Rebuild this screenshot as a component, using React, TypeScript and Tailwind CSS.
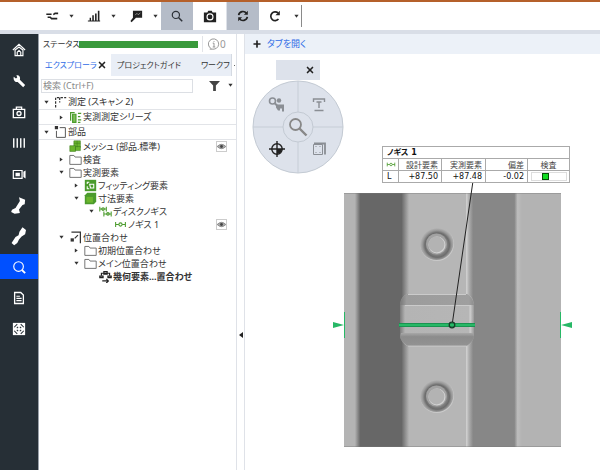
import React from 'react';
import clsx from 'clsx';
import { Plus, X } from 'lucide-react';

const Caret = ({ open = true }) => (
  <svg viewBox="0 0 6 6" className="h-[5px] w-[5px] shrink-0" fill="#333">
    {open ? <path d="M0.5 1h5L3 4.500z" /> : <path d="M1 .5v5l3.500-2.500z" />}
  </svg>
);

const Magnifier = ({ className = '' }) => (
  <svg viewBox="0 0 16 16" className={className} fill="none" stroke="currentColor">
    <circle cx="6.5" cy="6.5" r="4.8" strokeWidth="1.6" />
    <path d="M10 10l5 5" strokeWidth="2" />
  </svg>
);

const toolIcons = {
  align: (
    <g fill="none" stroke="#222" strokeWidth="1.800">
      <path d="M1.500 6h6M9.500 6.500l2-1.500h3.500" />
      <path d="M3 9.500h3l1.500 1.500H14" />
    </g>
  ),
  bars: <path fill="#222" d="M1 13h14v1.4H1zM3 10h1.6v4H3zM6 7h1.8v7H6zM9.2 5H11v9H9.2zM12.4 2h1.8v12h-1.8z" />,
  label: (
    <g>
      <path fill="#222" d="M4.500 2H15v8H8l-5 5-1.4-1.4L4.500 10z" />
      <path d="M7 7l2-2 1.5 1.5L13 4.500" stroke="#ccc" fill="none" strokeWidth=".7" />
    </g>
  ),
  camera: (
    <g>
      <path fill="#222" d="M1 4h4l1-2h4l1 2h4v11H1z" />
      <circle cx="8" cy="9" r="3.4" fill="none" stroke="#fff" strokeWidth="1.3" />
    </g>
  ),
  sync: (
    <g fill="none" stroke="#222" strokeWidth="1.9">
      <path d="M3 7a5 5 0 0 1 9-2M13 9a5 5 0 0 1-9 2" />
      <path d="M13.500 2v4.500H9zM2.500 14V9.500H7z" fill="#222" stroke="none" />
    </g>
  ),
  rotate: (
    <g fill="none" stroke="#222" strokeWidth="1.900">
      <path d="M12 11.500A5 5 0 1 1 11.500 4.500" />
      <path d="M13.500 2v5H8.500z" fill="#222" stroke="none" />
    </g>
  ),
};

const ToolIcon = ({ name }) => (
  <svg viewBox="0 0 16 16" className="h-[14px] w-[14px]">
    {toolIcons[name]}
  </svg>
);

const SplitTool = ({ name, title }) => (
  <div className="flex h-full">
    <button aria-label={title} className="flex w-7 items-center justify-center">
      <ToolIcon name={name} />
    </button>
    <button aria-label={`${title} menu`} className="flex w-[10px] items-center justify-center">
      <Caret />
    </button>
  </div>
);

const Toolbar = () => (
  <header className="border-t-2 border-[#b5602a] bg-white">
    <div className="flex h-7 items-center pl-[38px]">
      <div className="flex h-full gap-1">
        <SplitTool name="align" title="Align" />
        <SplitTool name="bars" title="Chart" />
        <SplitTool name="label" title="Label" />
      </div>
      <button aria-label="Inspect" className="ml-px flex h-full w-8 items-center justify-center bg-[#b5bcc8] text-[#2c3138]">
        <Magnifier className="h-3 w-3" />
      </button>
      <button aria-label="Camera" className="flex h-full w-[33px] items-center justify-center">
        <ToolIcon name="camera" />
      </button>
      <button aria-label="Sync" className="flex h-full w-[33px] items-center justify-center border-l border-[#dde1e8] bg-[#b5bcc8]">
        <ToolIcon name="sync" />
      </button>
      <button aria-label="Recalculate" className="flex h-full w-8 items-center justify-center">
        <ToolIcon name="rotate" />
      </button>
      <button aria-label="Recalculate menu" className="flex h-full w-[10px] items-center justify-center">
        <Caret />
      </button>
      <div className="h-[22px] w-px bg-[#8a8a8a]" />
    </div>
    <div className="h-1 bg-[#d9dee7]" />
  </header>
);

const navItems = [
  {
    title: 'Home',
    icon: <path d="M1 8l7-6.500L15 8M3.500 8v6.500h9V8L8 4.500zM6 14.500v-4L8 8.500l2 2v4" fill="none" stroke="#fff" strokeWidth="1.300" />,
  },
  {
    title: 'Tools',
    icon: <path d="M2 3l2.500 2L6 4 5 1.500C8 1 10 3.500 9 6.500L15 12.500 12.800 15 6.500 9C4 10 1 7 2 3z" fill="#fff" />,
  },
  {
    title: 'Measure',
    icon: (
      <g fill="none" stroke="#fff" strokeWidth="1.5">
        <path d="M1.500 5h13v9.500h-13zM5 5V2.500h6V5" />
        <circle cx="8" cy="9.700" r="2.300" />
        <path d="M8 9h.1" />
      </g>
    ),
  },
  { title: 'Series', icon: <path d="M2 2.500v11M6 2.500v11M10 2.500v11M14 2.500v11" stroke="#fff" strokeWidth="1.600" /> },
  {
    title: 'Record',
    icon: (
      <g>
        <path d="M1.500 4h10v9h-10z" fill="none" stroke="#fff" strokeWidth="1.400" />
        <path d="M4 6.500h5v4H4zM13 5.500L15.500 4v9L13 11.500z" fill="#fff" />
      </g>
    ),
  },
  { title: 'Sensor', icon: <path d="M8-1l7 3-.5 5-2.500 1-4 5 1 4-6 1-4-2 1-2.500 4-2 5-8z" fill="#fff" /> },
  { title: 'Probe', icon: <path d="M12-2l4 3-1 5-4 2.500L8 12l-2 4-3.500 2.500L-.5 16 4 9l3.500-2 1-4z" fill="#fff" /> },
  {
    title: 'Inspection',
    active: true,
    icon: (
      <g fill="none" stroke="#fff">
        <circle cx="7.500" cy="7.500" r="5.500" strokeWidth="1.300" />
        <path d="M11.500 11.500L15 15" strokeWidth="2.200" />
      </g>
    ),
  },
  {
    title: 'Report',
    icon: (
      <g>
        <path d="M3 1.700h7l3 3v9.600H3z" fill="none" stroke="#fff" strokeWidth="1.500" />
        <path d="M5 6h4M5 8.500h6M5 11h6" stroke="#fff" strokeWidth="1.300" />
      </g>
    ),
  },
  {
    title: 'Modules',
    icon: (
      <g>
        <path d="M1 1h14v14H1z" fill="#fff" />
        <path d="M2.500 6L6 2.500M10 2.500L13.500 6M2.500 10L6 13.500M10 13.500l3.500-3.500M5.500 7L7 5.500M9 5.500L10.500 7M5.500 9L7 10.500M9 10.500L10.500 9" stroke="#262f36" strokeWidth="1.200" />
      </g>
    ),
  },
];

const Sidebar = () => (
  <nav className="flex w-[39px] shrink-0 flex-col gap-1.5 border-r border-[#9aa1aa] bg-[#262f36] pt-[3px]">
    {navItems.map((item) => (
      <button
        key={item.title}
        aria-label={item.title}
        className={clsx('flex h-[25px] w-full items-center justify-center', item.active && 'bg-[#0050ff]')}
      >
        <svg viewBox="0 0 16 16" className="h-[14px] w-[14px] overflow-visible">
          {item.icon}
        </svg>
      </button>
    ))}
  </nav>
);

const green = '#4b9b2c';

const treeIcons = {
  scan: <path d="M2 14V2h13M7 2v6" fill="none" stroke="#333" strokeWidth="1.500" strokeDasharray="3 1.500" />,
  series: (
    <g fill="none" stroke={green} strokeWidth="1.500">
      <path d="M2 12V2h5" />
      <path d="M4.500 4h4v10h-4z" fill="#7fc25a" />
      <path d="M11 3h4M11 7h3M11 11h4M11 14h3" />
    </g>
  ),
  part: (
    <g>
      <path d="M7 2h7v12H3V6" fill="none" stroke="#555" strokeWidth="1.200" />
      <path d="M1 0h4v4H1z" fill="#333" />
    </g>
  ),
  mesh: (
    <g fill="#6bb52d" stroke="#3f7f1f" strokeWidth=".7">
      <path d="M6 1h8v8H6z" />
      <path d="M1 7h7v7H1zM8 8h6v5H8z" />
      <path d="M6 4h8M10 1v8" />
    </g>
  ),
  folder: <path d="M1 3h5l1.500 2H15v9H1z" fill="none" stroke="#666" strokeWidth="1.100" />,
  fitting: (
    <g>
      <path d="M1 1h14v14H1z" fill={green} />
      <g fill="none" stroke="#fff" strokeWidth="1.300">
        <path d="M4 6V4h2.500M4 9v3h2.500" />
        <path d="M7 6.500h5v4.500H8z" />
      </g>
    </g>
  ),
  dimension: (
    <g>
      <path d="M1 4l3-3h11v11l-3 3H1z" fill={green} />
      <path d="M3 6h8v7H3z" fill="#6bb52d" />
    </g>
  ),
  disc: (
    <g fill="none" stroke={green} strokeWidth="1.300">
      <path d="M1 2v6M1 5h8M9 2v6M6 8v6M6 11h9M15 8v6" />
      <circle cx="5" cy="5" r="1.600" />
      <circle cx="11" cy="11" r="1.600" />
    </g>
  ),
  caliper: (
    <g fill="none" stroke={green} strokeWidth="1.300">
      <path d="M2 5v6M2 8h4M10 8h4M14 5v6" />
      <circle cx="8" cy="8" r="2" />
    </g>
  ),
  align: (
    <g fill="none" stroke="#333" strokeWidth="1.500">
      <path d="M3 1.500h11V15" />
      <path d="M7 9l4-4" />
      <path d="M2 9h4v4H2z" fill="#333" stroke="none" />
    </g>
  ),
  geometry: (
    <g fill="none" stroke="#222" strokeWidth="1.500">
      <path d="M3 7V4h10v3M6 2h4v3H6z" />
      <path d="M1 7.500h4v2H1zM11 7.500h4v2h-4z" />
      <path d="M4 13.500h7M9 11l2.500 2.500L9 16" />
    </g>
  ),
};

const TreeIcon = ({ name }) => (
  <svg viewBox="0 0 16 16" className="h-[13px] w-[13px] shrink-0">
    {treeIcons[name]}
  </svg>
);

const treeRows = [
  { label: '測定 (スキャン 2)', icon: 'scan', indent: 'pl-[5px]', open: true, group: true },
  { label: '実測測定シリーズ', icon: 'series', indent: 'pl-5', open: false, group: true },
  { label: '部品', icon: 'part', indent: 'pl-[5px]', open: true, group: true },
  { label: 'メッシュ (部品.標準)', icon: 'mesh', indent: 'pl-5', eye: true },
  { label: '検査', icon: 'folder', indent: 'pl-5', open: false },
  { label: '実測要素', icon: 'folder', indent: 'pl-5', open: true },
  { label: 'フィッティング要素', icon: 'fitting', indent: 'pl-[35px]', open: false },
  { label: '寸法要素', icon: 'dimension', indent: 'pl-[35px]', open: true },
  { label: 'ディスクノギス', icon: 'disc', indent: 'pl-[50px]', open: true },
  { label: 'ノギス 1', icon: 'caliper', indent: 'pl-[65px]', eye: true },
  { label: '位置合わせ', icon: 'align', indent: 'pl-5', open: true },
  { label: '初期位置合わせ', icon: 'folder', indent: 'pl-[35px]', open: false },
  { label: 'メイン位置合わせ', icon: 'folder', indent: 'pl-[35px]', open: true },
  { label: '幾何要素...置合わせ', icon: 'geometry', indent: 'pl-[50px]', bold: true },
];

const EyeButton = () => (
  <button aria-label="Visibility" className="mr-[9px] ml-auto flex h-[11px] w-[11px] items-center justify-center border border-[#ccc]">
    <svg viewBox="0 0 10 8" className="h-[7px] w-[9px]">
      <path d="M0 4q5-5 10 0q-5 5-10 0z" fill="#aaa" stroke="#777" strokeWidth=".8" />
      <circle cx="5" cy="4" r="1.600" fill="#444" />
    </svg>
  </button>
);

const Tree = () => (
  <ul>
    {treeRows.map((row) => (
      <li
        key={row.label}
        className={clsx(
          'flex items-center text-[9px] whitespace-nowrap',
          row.indent,
          row.group ? 'h-[15px] border-b border-[#e2e4e8]' : 'h-[13px]',
          row.bold && 'font-bold'
        )}
      >
        <span className="mr-[5px] flex w-[5px]">{row.open !== undefined && <Caret open={row.open} />}</span>
        <TreeIcon name={row.icon} />
        <span className="ml-px">{row.label}</span>
        {row.eye && <EyeButton />}
      </li>
    ))}
  </ul>
);

const Explorer = () => (
  <aside className="w-[198px] shrink-0 border-r border-[#dfe2e8] bg-white">
    <div className="flex h-5 items-center pl-1">
      <span className="w-9 shrink-0 text-[8px] whitespace-nowrap">ステータス</span>
      <div className="h-[7px] w-[119px] shrink-0 bg-[#3a9a3c]" />
      <div className="ml-1 flex h-4 items-center border-l border-[#e2e4e8] pl-[5px] text-[10px] text-[#999]">
        <svg viewBox="0 0 14 14" className="h-3 w-3" fill="none" stroke="#888">
          <path d="M4 12.500A6 6 0 1 1 7 13H2M7 6v4.500M5.500 6H7M5.500 10.500h3M7 3.500v1" />
        </svg>
        0
      </div>
    </div>
    <div role="tablist" className="flex h-[22px] items-stretch bg-[#e9eef6] text-[8px] whitespace-nowrap">
      <button role="tab" aria-selected="true" className="flex w-[72px] shrink-0 items-center justify-between bg-white pr-1 pl-1.5 text-[#2e6be6]">
        エクスプローラ
        <X className="h-[10px] w-[10px] shrink-0 text-[#222]" strokeWidth={4} />
      </button>
      <button role="tab" aria-selected="false" className="w-[84px] shrink-0 pl-1.5 text-left">
        プロジェクトガイド
      </button>
      <button role="tab" aria-selected="false" className="w-9 shrink-0 pl-1.5 text-left">
        ワークフ
      </button>
      <button aria-label="More tabs" className="flex grow items-center justify-center border-l border-[#d5dae2] bg-white">
        <span className="h-px w-px bg-[#666]" />
      </button>
    </div>
    <div className="flex h-[19px] items-center pl-0.5">
      <input
        aria-label="検索"
        placeholder="検索 (Ctrl+F)"
        className="h-[14px] w-[152px] border border-[#dcdfe4] px-px text-[9px] placeholder:text-[#888]"
      />
      <button aria-label="Filter" className="ml-4 flex items-center gap-2">
        <svg viewBox="0 0 12 12" className="h-[11px] w-[11px]" fill="#444">
          <path d="M0 1h12L7.500 6v6h-3V6z" />
        </svg>
        <Caret />
      </button>
    </div>
    <Tree />
  </aside>
);

const RadialMenu = () => (
  <svg viewBox="0 0 92 94" className="absolute top-[26px] left-[7px] h-[94px] w-[92px]" fill="none">
    <ellipse cx="46" cy="47" rx="45" ry="46" fill="#dde2eb" stroke="#c3cad3" />
    <path d="M46 1v92M1 47h90" stroke="#c6cdd6" />
    <circle cx="46" cy="47" r="15" fill="#dde2eb" stroke="#c3cad3" />
    <g stroke="#888">
      <circle cx="43.500" cy="44.500" r="5.500" strokeWidth="1.800" />
      <path d="M47.500 48.500l7 7" strokeWidth="2.400" />
    </g>
    <g stroke="#8a8e94">
      <circle cx="20.500" cy="21" r="3" strokeWidth="1.600" />
      <path d="M22.500 23l3 3" strokeWidth="2" />
      <circle cx="27" cy="20.500" r="2.200" fill="#8a8e94" stroke="none" />
      <path d="M24 24.500h8v7h-2v-3h-2v2h-2l-2-3z" fill="#8a8e94" stroke="none" />
    </g>
    <path d="M61.500 22v-3h11v3M67 22v6M64.500 22h5M62.500 30.500h9" stroke="#8a8e94" strokeWidth="1.400" />
    <circle cx="25" cy="69" r="5.200" stroke="#222" strokeWidth="1.400" />
    <path d="M25 69v5a5 5 0 0 0 5-5z" fill="#222" />
    <path d="M25 61v16M17 69h16" stroke="#222" strokeWidth="1.400" />
    <path d="M61.500 64.500h9v10h-9z" stroke="#8a8e94" />
    <path d="M62 63.500h11v11" stroke="#8a8e94" strokeWidth="1.800" />
    <path d="M63.500 66.500h1M67.500 66.500h1M63.500 72.500h1M67.500 72.500h1" stroke="#8a8e94" />
  </svg>
);

const Hole = ({ cy }) => (
  <g>
    <circle cx="437" cy={cy + 1} r="17" fill="#cacaca" />
    <circle cx="436.500" cy={cy} r="17" fill="url(#rim)" />
    <circle cx="436.500" cy={cy + 1} r="10.500" fill="#a2a2a2" />
    <circle cx="437" cy={cy + 2} r="8.500" fill="#d4d4d4" />
    <circle cx="436.500" cy={cy + 1.5} r="7.900" fill="#b3b3b3" />
  </g>
);

// scanned sheet metal part with the caliper section and its leader line
const PartModel = () => (
  <svg viewBox="332 181 242 268" className="absolute top-[127px] left-[87px] h-[268px] w-[242px]">
    <defs>
      <linearGradient id="surface" gradientUnits="userSpaceOnUse" x1="344" x2="561" y1="0" y2="0">
        <stop offset="0" stopColor="#b4b4b4" />
        <stop offset=".05" stopColor="#b4b4b4" />
        <stop offset=".075" stopColor="#676767" />
        <stop offset=".265" stopColor="#676767" />
        <stop offset=".3" stopColor="#b6b6b6" />
        <stop offset=".56" stopColor="#b6b6b6" />
        <stop offset=".565" stopColor="#d0d0d0" />
        <stop offset=".575" stopColor="#b0b0b0" />
        <stop offset=".595" stopColor="#878787" />
        <stop offset=".785" stopColor="#878787" />
        <stop offset=".8" stopColor="#bdbdbd" />
        <stop offset=".82" stopColor="#b3b3b3" />
        <stop offset="1" stopColor="#b3b3b3" />
      </linearGradient>
      <linearGradient id="bump" gradientUnits="userSpaceOnUse" x1="399" x2="475" y1="0" y2="0">
        <stop offset="0" stopColor="#707070" />
        <stop offset=".08" stopColor="#b4b4b4" />
        <stop offset=".92" stopColor="#b6b6b6" />
        <stop offset=".935" stopColor="#cfcfcf" />
        <stop offset="1" stopColor="#898989" />
      </linearGradient>
      <linearGradient id="upperStep" gradientUnits="userSpaceOnUse" x1="399" x2="475" y1="0" y2="0">
        <stop offset="0" stopColor="#727272" />
        <stop offset=".1" stopColor="#9c9c9c" />
        <stop offset=".92" stopColor="#9f9f9f" />
        <stop offset="1" stopColor="#8a8a8a" />
      </linearGradient>
      <linearGradient id="lowerStep" x1="0" x2="0" y1="0" y2="1">
        <stop offset="0" stopColor="#a8a8a8" />
        <stop offset=".3" stopColor="#8c8c8c" />
        <stop offset="1" stopColor="#929292" />
      </linearGradient>
      <radialGradient id="rim" cx=".52" cy=".56" r=".5">
        <stop offset=".55" stopColor="#868686" />
        <stop offset=".72" stopColor="#6c6c6c" />
        <stop offset=".86" stopColor="#999" />
        <stop offset="1" stopColor="#b6b6b6" />
      </radialGradient>
    </defs>
    <path d="M344 193h217v254H344z" fill="url(#surface)" />
    <path d="M344 193.500h217M344 446.500h217" stroke="#777" strokeOpacity=".4" />
    <path d="M400 303q1-6 7-9h60q6 3 7 9v34q-1 5-7 9h-60q-6-4-7-9z" fill="url(#bump)" />
    <path d="M400 305q1-8 7-11h60q6 3 7 11z" fill="url(#upperStep)" />
    <path d="M408 294.500h58M405 305.500h66M408 346h58" stroke="#cbcbcb" />
    <path d="M401 333h72l1 4q-1 5-7 8.500h-60q-6-4-7-8.500z" fill="url(#lowerStep)" />
    <Hole cy={243} />
    <Hole cy={395} />
    <path d="M399 323h76v4h-76z" fill="#27b866" />
    <path d="M399 323.500h76M399 326.500h76" stroke="#168348" strokeOpacity=".7" />
    <path d="M473 181L452.500 322" stroke="#222" fill="none" />
    <circle cx="452" cy="325" r="2.800" fill="none" stroke="#173d28" strokeWidth="1.300" />
    <path d="M333 322l11 3-11 3zM572 322l-11 3 11 3z" fill="#27b866" />
    <path d="M344.500 312v26M560.500 312v26" stroke="#27b866" />
  </svg>
);

const CaliperTable = () => (
  <table className="absolute top-[92px] left-[137px] w-[187px] table-fixed border-collapse border border-[#aaa] bg-white text-[8px] leading-[11px]">
    <colgroup>
      <col className="w-4" />
      <col className="w-[43px]" />
      <col className="w-11" />
      <col className="w-[42px]" />
      <col className="w-[42px]" />
    </colgroup>
    <tbody>
      <tr className="h-3 border-b border-[#aaa]">
        <th colSpan={5} className="px-1 text-left font-['DejaVu_Sans','Noto_Sans_CJK_JP',sans-serif] font-bold text-[#111]">
          ノギス 1
        </th>
      </tr>
      <tr className="h-3 border-b border-[#aaa] text-[#444]">
        <td className="border-r border-[#aaa]">
          <div className="flex justify-center">
            <svg viewBox="0 4 16 8" className="h-[5px] w-[10px]">
              {treeIcons.caliper}
            </svg>
          </div>
        </td>
        <th className="border-r border-[#aaa] pr-[3px] text-right font-normal">設計要素</th>
        <th className="border-r border-[#aaa] pr-[3px] text-right font-normal">実測要素</th>
        <th className="border-r border-[#aaa] pr-[3px] text-right font-normal">偏差</th>
        <th className="text-center font-normal">検査</th>
      </tr>
      <tr className="h-[11px] font-['DejaVu_Sans',sans-serif] text-[#111]">
        <td className="border-r border-[#aaa] pl-1">L</td>
        <td className="border-r border-[#aaa] pr-[3px] text-right">+87.50</td>
        <td className="border-r border-[#aaa] pr-[3px] text-right">+87.48</td>
        <td className="border-r border-[#aaa] pr-[3px] text-right">-0.02</td>
        <td>
          <div className="mx-auto flex h-[9px] w-9 items-center border border-[#ddd] pl-2.5">
            <div className="h-[7px] w-[7px] border border-[#064d06] bg-[#11dd22]" />
          </div>
        </td>
      </tr>
    </tbody>
  </table>
);

const Workspace = () => (
  <main className="flex min-w-0 grow flex-col border-l border-[#dfe2e8] bg-white">
    <div className="flex h-5 items-center bg-[#ecf1f8] pl-[7px] text-[9px]">
      <button className="flex items-center gap-[5px] text-[#2e6be6]">
        <Plus className="h-[10px] w-[10px] text-[#222]" strokeWidth={4} />
        タブを開く
      </button>
    </div>
    <div className="relative grow">
      <div className="absolute top-[6px] left-[31px] flex h-5 w-11 items-center justify-end bg-[#dde2eb] pr-[5px]">
        <button aria-label="Close">
          <X className="h-[10px] w-[10px] text-[#222]" strokeWidth={4} />
        </button>
      </div>
      <RadialMenu />
      <PartModel />
      <CaliperTable />
    </div>
  </main>
);

const App = () => {
  return (
    <div className="flex min-h-screen flex-col overflow-hidden bg-white font-['Noto_Sans','Noto_Sans_CJK_JP',sans-serif] text-[#333] [font-feature-settings:'palt']">
      <Toolbar />
      <div className="flex grow">
        <Sidebar />
        <Explorer />
        <button aria-label="Collapse panel" className="flex w-[7px] items-center justify-center pt-[165px]">
          <svg viewBox="0 0 4 6" className="h-[6px] w-1" fill="#222">
            <path d="M4 0v6L0 3z" />
          </svg>
        </button>
        <Workspace />
      </div>
    </div>
  );
};

export default App;
